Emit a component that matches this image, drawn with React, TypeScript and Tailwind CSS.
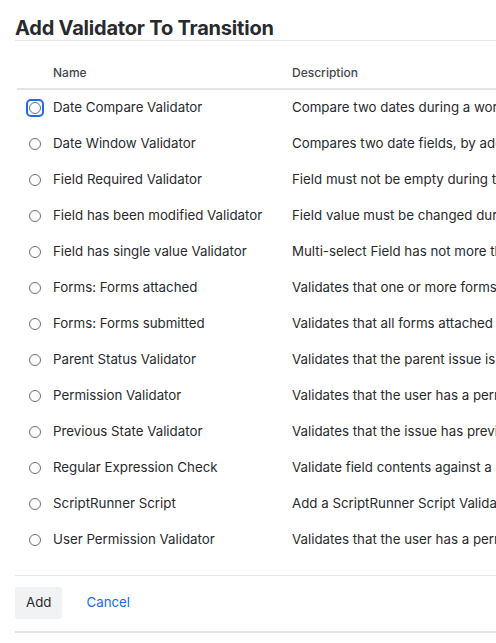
import React from 'react';

const validators: [string, string][] = [
  ['Date Compare Validator', 'Compare two dates during a workflow transition.'],
  ['Date Window Validator', 'Compares two date fields, by adding a window of days.'],
  ['Field Required Validator', 'Field must not be empty during the transition.'],
  ['Field has been modified Validator', 'Field value must be changed during the transition.'],
  ['Field has single value Validator', 'Multi-select Field has not more than one value.'],
  ['Forms: Forms attached', 'Validates that one or more forms are attached.'],
  ['Forms: Forms submitted', 'Validates that all forms attached are submitted.'],
  ['Parent Status Validator', 'Validates that the parent issue is in a given status.'],
  ['Permission Validator', 'Validates that the user has a permission.'],
  ['Previous State Validator', 'Validates that the issue has previously been in a state.'],
  ['Regular Expression Check', 'Validate field contents against a regular expression.'],
  ['ScriptRunner Script', 'Add a ScriptRunner Script Validator.'],
  ['User Permission Validator', 'Validates that the user has a permission.'],
];

const Radio = ({ focused }: { focused: boolean }) => (
  <span
    className={
      'flex h-[18px] w-[18px] items-center justify-center rounded-[5px] ' +
      (focused ? 'border-2 border-[#1d6ae5]' : 'border-2 border-transparent')
    }
  >
    <span className="block h-[12px] w-[12px] rounded-full border border-[#6b6e76] bg-white" />
  </span>
);

export default function App() {
  return (
    <div
      className="h-[643px] w-[496px] overflow-hidden bg-white text-[#292a2e]"
      style={{ fontFamily: 'Inter, "Noto Sans", sans-serif' }}
    >
      <div className="w-[640px] pl-[15px]">
        <h2 className="border-b border-[#e5e6e8] pt-[18px] pb-[1px] text-[20px] font-bold leading-[21px] tracking-[-0.2px] text-[#292a2e]">
          Add Validator To Transition
        </h2>
        <div className="ml-[2px] mt-[15px]">
          <div className="grid h-[34px] grid-cols-[36px_239px_1fr] items-center border-b-2 border-[#e2e3e5] text-[12px] font-medium text-[#44474e]">
            <div />
            <div className="pt-[2px]">Name</div>
            <div className="pt-[2px]">Description</div>
          </div>
          {validators.map(([name, desc], i) => (
            <div
              key={name}
              className="grid h-[36px] grid-cols-[36px_239px_1fr] items-center text-[13.3px] text-[#292a2e]"
            >
              <div className="flex pl-[9px]">
                <Radio focused={i === 0} />
              </div>
              <div className="whitespace-nowrap">{name}</div>
              <div className="whitespace-nowrap">{desc}</div>
            </div>
          ))}
        </div>
        <div className="mt-[17px] flex items-center gap-[24px] border-t border-[#e5e6e8] pt-[11px] pb-[12px] border-b-2 border-b-[#e2e3e5]">
          <button className="h-[32px] rounded-[3px] bg-[#f1f2f4] px-[11px] text-[13.3px] text-[#292a2e]">
            Add
          </button>
          <span className="text-[13.3px] text-[#1d6ae5]">Cancel</span>
        </div>
      </div>
    </div>
  );
}
